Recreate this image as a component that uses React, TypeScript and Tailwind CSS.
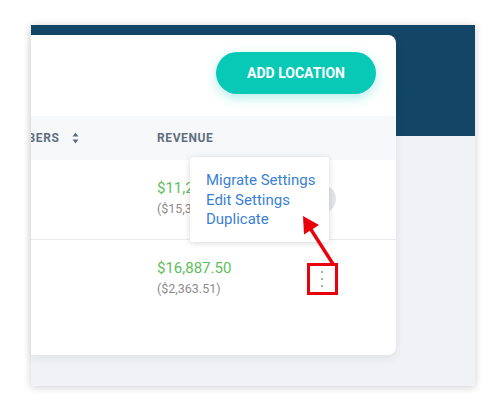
import React from "react";

type Row = {
  revenue: string;
  refund: string;
  hovered?: boolean;
  marked?: boolean;
};

const rows: Row[] = [
  { revenue: "$11,250.00", refund: "($15,375.00)", hovered: true },
  { revenue: "$16,887.50", refund: "($2,363.51)", marked: true },
];

function SortIcon() {
  return (
    <svg width="7" height="12" viewBox="0 0 7 12" className="text-[#5f6f80]">
      <path d="M3.5 0.5 L6.5 4.5 H0.5 Z" fill="currentColor" />
      <path d="M3.5 11.5 L6.5 7.5 H0.5 Z" fill="currentColor" />
    </svg>
  );
}

function KebabButton({ hovered, marked }: { hovered?: boolean; marked?: boolean }) {
  return (
    <div className="relative w-[28px] h-[28px]">
      <div
        className={`w-[28px] h-[28px] rounded-full flex flex-col items-center justify-center gap-[5px] ${
          hovered ? "bg-[#e3e5e8]" : ""
        }`}
      >
        <span className="w-[2px] h-[2px] rounded-full bg-[#8a929c]" />
        <span className="w-[2px] h-[2px] rounded-full bg-[#8a929c]" />
        <span className="w-[2px] h-[2px] rounded-full bg-[#8a929c]" />
      </div>
      {marked && (
        <div className="absolute left-[-1px] top-[-2px] w-[31px] h-[32px] border-[3px] border-[#e8000b]" />
      )}
    </div>
  );
}

export default function App() {
  return (
    <div className="relative w-[503px] h-[411px] bg-white pt-[25px] pl-[31px] font-['Roboto','Liberation_Sans',sans-serif]">
      <div className="w-[444px] h-[361px] pt-[10px] bg-[linear-gradient(#134666_111px,#f1f2f6_111px)] shadow-[0_1px_8px_rgba(0,0,0,0.2)]">
        <div className="relative w-[365px] h-[320px] bg-white rounded-r-lg overflow-hidden shadow-[0_3px_10px_rgba(0,0,0,0.07)]">
          <div className="h-[81px] flex justify-end pt-[17px] pr-5">
            <button className="w-[160px] h-[42px] rounded-full bg-[#07c9b5] text-white text-[14px] font-bold shadow-[0_4px_12px_rgba(7,201,181,0.3)]">
              ADD LOCATION
            </button>
          </div>

          <div className="h-[44px] bg-[#f7f8fa] flex items-center -ml-[33px] text-[12px] font-bold tracking-[0.05em] text-[#5f6f80]">
            <div className="w-[159px] flex items-center gap-[13px]">
              <span>MEMBERS</span>
              <SortIcon />
            </div>
            <div>REVENUE</div>
          </div>

          {rows.map((row, i) => (
            <div
              key={i}
              className={`h-[80px] flex -ml-[30px] ${i < rows.length - 1 ? "border-b border-[#e9ebef]" : ""}`}
            >
              <div className="w-[156px]" />
              <div className="w-[151px] flex flex-col pt-[18px]">
                <span className="text-[15px] leading-[20px] text-[#5cbf5c]">{row.revenue}</span>
                <span className="text-[12.5px] leading-[22px] text-[#8c8c8c]">{row.refund}</span>
              </div>
              <div className="flex items-center pb-[2px]">
                <KebabButton hovered={row.hovered} marked={row.marked} />
              </div>
            </div>
          ))}

          <div className="absolute left-[159px] top-[122px] w-[139px] h-[85px] bg-white rounded-[3px] shadow-[0_1px_6px_rgba(0,0,0,0.16)] pt-[14px] pl-4 text-[15px] leading-[19.5px] text-[#3a7fd4]">
            <div>Migrate Settings</div>
            <div>Edit Settings</div>
            <div>Duplicate</div>
          </div>
        </div>
      </div>

      <svg className="absolute left-0 top-0 pointer-events-none" width="503" height="411">
        <line x1="333" y1="264" x2="310" y2="228" stroke="#e8000b" strokeWidth="3.4" />
        <polygon points="303,216 319,225 304,234.6" fill="#e8000b" />
      </svg>
    </div>
  );
}
